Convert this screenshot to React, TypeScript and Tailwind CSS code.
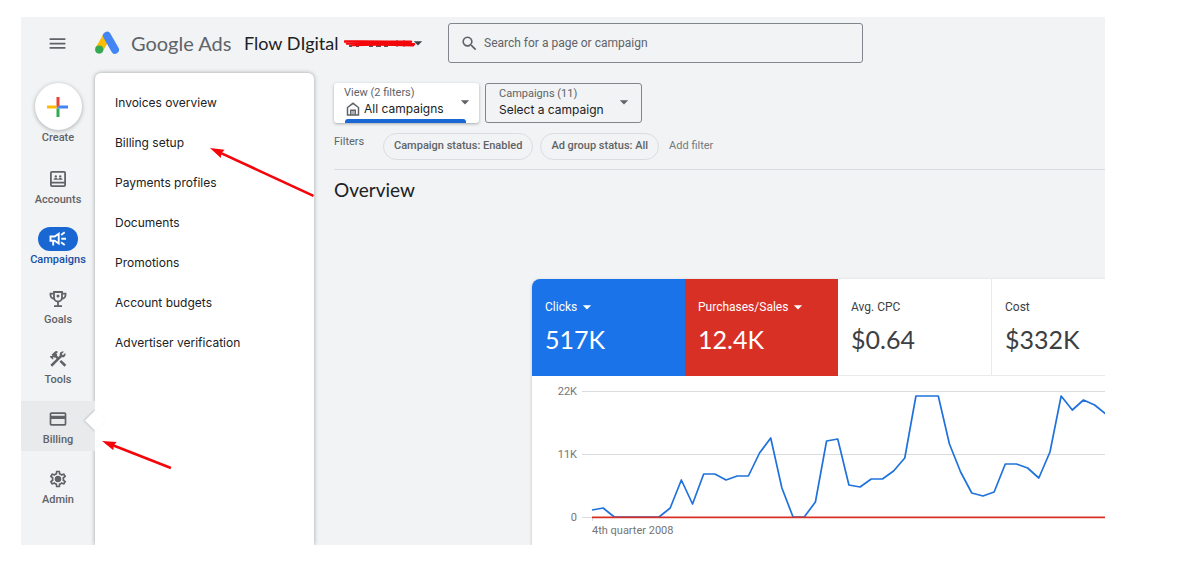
import type { ReactNode } from 'react'
import clsx from 'clsx'
import {
  MdArrowDropDown,
  MdConstruction,
  MdMenu,
  MdOutlineCreditCard,
  MdOutlineSettings,
  MdSearch,
} from 'react-icons/md'

const flyoutLinks = [
  'Invoices overview',
  'Billing setup',
  'Payments profiles',
  'Documents',
  'Promotions',
  'Account budgets',
  'Advertiser verification',
]

const metrics = [
  { label: 'Clicks', value: '517K', tone: 'bg-[#1a73e8] text-white', menu: true },
  { label: 'Purchases/Sales', value: '12.4K', tone: 'bg-[#d93025] text-white', menu: true },
  { label: 'Avg. CPC', value: '$0.64', tone: 'border-b border-[#e8eaed] text-[#3c4043]', menu: false },
  { label: 'Cost', value: '$332K', tone: 'border-b border-l border-[#e8eaed] text-[#3c4043]', menu: false },
]

// distance below the 22K grid line, one entry per period
const clicks = [
  119, 117, 126, 126, 126, 126, 126, 117, 89, 113, 83, 83, 89, 85, 85, 62, 47, 97, 126, 126, 111, 50,
  48, 94, 96, 88, 88, 80, 67, 5, 5, 5, 53, 81, 102, 105, 101, 73, 73, 77, 87, 61, 5, 19, 9, 14, 23,
]

function AdsLogo() {
  return (
    <svg viewBox="0 0 24 24" className="h-6 w-6" strokeWidth="8" fill="none" aria-hidden="true">
      <path d="M12 5 4.2 18.5" stroke="#fbbc04" />
      <path d="M12 4.7 20 18.7" stroke="#4285f4" strokeLinecap="round" />
      <circle cx="4.2" cy="18.6" r="4.1" fill="#34a853" />
    </svg>
  )
}

function CreateIcon() {
  return (
    <svg viewBox="0 0 22 22" className="h-[22px] w-[22px]" aria-hidden="true">
      <path d="M9.5 1h3v8.5l-3 3z" fill="#ea4335" />
      <path d="M9.5 12.5h3V21h-3z" fill="#34a853" />
      <path d="M0 9.5h9.5v3H0z" fill="#fbbc04" />
      <path d="M12.5 9.5H21v3H9.5z" fill="#4285f4" />
    </svg>
  )
}

function AccountsIcon() {
  return (
    <svg viewBox="0 0 18 18" className="h-[18px] w-[18px]" fill="currentColor" aria-hidden="true">
      <path
        fillRule="evenodd"
        d="M3 1h12a2 2 0 0 1 2 2v12a2 2 0 0 1-2 2H3a2 2 0 0 1-2-2V3a2 2 0 0 1 2-2Zm-.2 1.8v9h12.4v-9Zm0 10.6v1.8h12.4v-1.8Z"
      />
      <circle cx="6.8" cy="6.4" r="1.2" />
      <circle cx="11.2" cy="6.4" r="1.2" />
      <path d="M4.500 9.800c0-1.200 1.100-1.700 2.300-1.700s2.200.5 2.200 1.700Zm4.500 0c0-1.200 1-1.700 2.200-1.700s2.300.5 2.300 1.700Z" />
    </svg>
  )
}

function CampaignsIcon() {
  return (
    <svg
      viewBox="0 0 18 16"
      className="h-4 w-[18px]"
      fill="none"
      stroke="currentColor"
      strokeWidth="1.9"
      aria-hidden="true"
    >
      <path d="M1.500 5.500h4.200l4-2.700v9.700l-4-2.700H1.500Z" />
      <path d="M4.200 9.800v4.700" />
      <path d="M12.300 7.700H17M12.100 4l3.600-2.700M12.100 11.300l3.600 2.700" />
    </svg>
  )
}

function GoalsIcon() {
  return (
    <svg
      viewBox="0 0 18 18"
      className="h-[18px] w-[18px]"
      fill="none"
      stroke="currentColor"
      strokeWidth="1.8"
      aria-hidden="true"
    >
      <path d="M5 2h8v5.500a4 4 0 0 1-8 0Z" />
      <path d="M5 3.700H1.500V5A3.700 3.700 0 0 0 5.200 8.700M13 3.700h3.500V5a3.700 3.700 0 0 1-3.700 3.700M9 11.500V16M5 16.200h8" />
      <circle cx="9" cy="6" r="1.500" fill="currentColor" stroke="none" />
    </svg>
  )
}

function HomeIcon() {
  return (
    <svg
      viewBox="0 0 14 14"
      className="h-[14px] w-[14px] shrink-0 text-[#5f6368]"
      fill="none"
      stroke="currentColor"
      strokeWidth="1.5"
      aria-hidden="true"
    >
      <path d="M1.500 5.500 7 1.300l5.500 4.200v7.500h-11Z" />
      <path d="M4.800 13V8.300h4.400V13" />
      <path d="M7 8.300V13" strokeWidth="1" />
    </svg>
  )
}

function AdminIcon() {
  return (
    <span className="grid place-items-center">
      <MdOutlineSettings className="col-start-1 row-start-1 h-5 w-5" />
      <span className="col-start-1 row-start-1 h-[6px] w-[6px] rounded-full bg-current" />
    </span>
  )
}

const railItems: { label: string; icon: ReactNode; state?: 'active' | 'open' }[] = [
  { label: 'Accounts', icon: <AccountsIcon /> },
  { label: 'Campaigns', icon: <CampaignsIcon />, state: 'active' },
  { label: 'Goals', icon: <GoalsIcon /> },
  { label: 'Tools', icon: <MdConstruction className="h-5 w-5" /> },
  { label: 'Billing', icon: <MdOutlineCreditCard className="h-5 w-5" />, state: 'open' },
  { label: 'Admin', icon: <AdminIcon /> },
]

function Header() {
  return (
    <header className="flex h-14 items-center pb-1 pl-[26px]">
      <button type="button" aria-label="Main menu" className="text-[#5f6368]">
        <MdMenu className="h-[21px] w-[21px]" />
      </button>
      <a href="#home" className="ml-[27px] flex items-center gap-3 text-[#5f6368]">
        <AdsLogo />
        <span className="w-[113px] font-[Lato] text-xl leading-6 whitespace-nowrap">Google Ads</span>
      </a>
      <button type="button" aria-label="Switch account" className="flex items-center text-[#202124]">
        <span className="w-[100px] text-left font-[Lato] text-lg leading-6 whitespace-nowrap">
          Flow DIgital
        </span>
        <Redaction />
        <MdArrowDropDown className="-ml-2 h-5 w-5 text-[#3c4043]" />
      </button>
      <label className="ml-5 flex h-10 w-full max-w-[415px] items-center rounded-[3px] border border-[#80868b] pl-[11px]">
        <MdSearch className="h-[19px] w-[19px] shrink-0 text-[#5f6368]" />
        <input
          type="search"
          aria-label="Search"
          placeholder="Search for a page or campaign"
          className="ml-[5px] w-full bg-transparent text-xs outline-none placeholder:text-[#5f6368]"
        />
      </label>
    </header>
  )
}

function Redaction() {
  return (
    <svg viewBox="0 0 72 12" className="h-3 w-[72px]" fill="none" aria-hidden="true">
      <path d="M5 9h3m4 0h3m10 0h4m3 0h5m3 0h4m9-5.500v6m7-6v6" stroke="#3a1a1a" strokeWidth="1.5" />
      <path
        d="M1 4.500c12 0 40 .4 66 .2M3 6.500c20 .4 44 0 67 .7M8 8c18-.8 38-.6 61 .2"
        stroke="#f4050a"
        strokeWidth="2.600"
        strokeLinecap="round"
      />
    </svg>
  )
}

function Rail() {
  return (
    <nav className="flex w-[74px] shrink-0 flex-col pt-[10px] text-[11px] leading-4 font-medium text-[#5f6368]">
      <button type="button" className="flex flex-col items-center">
        <span className="flex h-[47px] w-[47px] items-center justify-center rounded-full bg-white shadow-[0_1px_4px_rgba(60,64,67,0.4)]">
          <CreateIcon />
        </span>
        Create
      </button>
      <div className="mt-[15px] flex flex-col gap-[10px]">
        {railItems.map((item) => (
          <a
            key={item.label}
            href={`#${item.label.toLowerCase()}`}
            className={clsx(
              'relative flex h-[50px] flex-col items-center gap-px pt-[6px]',
              item.state === 'active' && 'text-[#174ea6]',
              item.state === 'open' && 'bg-[#e8eaeb]',
            )}
          >
            <span
              className={clsx(
                'flex h-6 w-10 items-center justify-center rounded-full',
                item.state === 'active' && 'bg-[#1967d2] text-white',
              )}
            >
              {item.icon}
            </span>
            {item.label}
            {item.state === 'open' ? (
              <span className="absolute top-3 -right-2 h-[15px] w-[15px] rotate-45 bg-white shadow-[-1px_1px_2px_rgba(60,64,67,0.2)]" />
            ) : null}
          </a>
        ))}
      </div>
    </nav>
  )
}

function Flyout() {
  return (
    <nav className="w-[219px] shrink-0 rounded-t-md bg-white pt-[10px] shadow-[0_0_4px_rgba(60,64,67,0.45)]">
      {flyoutLinks.map((label) => (
        <a
          key={label}
          href="#billing"
          className="flex h-10 items-center pl-5 font-[Inter] text-xs text-[#202124]"
        >
          {label}
        </a>
      ))}
    </nav>
  )
}

function Scope() {
  return (
    <div className="flex gap-[6px]">
      <label className="relative flex h-10 w-[145px] flex-col rounded-[3px] bg-white pt-[2px] pl-[10px] shadow-[0_1px_3px_rgba(60,64,67,0.4)]">
        <span className="text-[11px] leading-4 text-[#5f6368]">View (2 filters)</span>
        <span className="flex items-center gap-1 pl-[2px]">
          <HomeIcon />
          <select className="w-full appearance-none bg-transparent font-[Inter] text-xs leading-4 text-[#202124]">
            <option>All campaigns</option>
          </select>
        </span>
        <MdArrowDropDown className="pointer-events-none absolute top-[9px] right-1 h-5 w-5 text-[#5f6368]" />
        <span className="absolute bottom-0 left-[11px] h-1 w-[121px] rounded-t-[3px] bg-[#1967d2]" />
      </label>
      <label className="relative flex h-10 w-[157px] flex-col rounded-[3px] border border-[#80868b] pt-[2px] pl-[13px]">
        <span className="text-[11px] leading-4 text-[#5f6368]">Campaigns (11)</span>
        <select className="w-full appearance-none bg-transparent font-[Inter] text-xs leading-4 text-[#202124]">
          <option>Select a campaign</option>
        </select>
        <MdArrowDropDown className="pointer-events-none absolute top-2 right-[7px] h-5 w-5 text-[#5f6368]" />
      </label>
    </div>
  )
}

function Filters() {
  const chip =
    'h-[27px] rounded-full border border-[#dadce0] px-[10px] font-medium whitespace-nowrap text-[#5f6368]'
  return (
    <div className="flex items-center border-b border-[#dadce0] pt-[10px] pb-[9px] text-[11px] text-[#5f6368]">
      <span className="w-[49px] self-start leading-[18px]">Filters</span>
      <button type="button" className={chip}>
        Campaign status: Enabled
      </button>
      <button type="button" className={clsx(chip, 'ml-[7px]')}>
        Ad group status: All
      </button>
      <button type="button" className="ml-[10px] text-[#757a7f]">
        Add filter
      </button>
    </div>
  )
}

function ClicksChart() {
  const points = clicks.map((y, i) => `${10 + i * 11.17},${y + 1}`).join(' ')
  return (
    <div className="flex overflow-hidden pt-[14px] pb-[6px] text-[11px] leading-4 text-[#757575]">
      <div className="-mt-[6px] flex h-[142px] w-[45px] shrink-0 flex-col justify-between text-right">
        <span>22K</span>
        <span>11K</span>
        <span>0</span>
      </div>
      <div className="ml-[5px] shrink-0">
        <svg viewBox="0 0 540 133" className="h-[133px] w-[540px]" fill="none" aria-hidden="true">
          <path d="M0 1.500h540M0 64.500h540M0 127.500h540M10.500 127v4" stroke="#dadce0" />
          <polyline points={points} stroke="#1f72dc" strokeWidth="1.700" strokeLinejoin="round" />
          <path d="M10 127.300h530" stroke="#d93025" strokeWidth="1.800" />
        </svg>
        <p className="pl-[10px]">4th quarter 2008</p>
      </div>
    </div>
  )
}

function Overview() {
  return (
    <section>
      <h1 className="pt-[6px] font-[Lato] text-[19px] leading-7 text-[#202124]">Overview</h1>
      <div className="mt-[75px] ml-[198px] overflow-hidden rounded-tl-lg bg-white shadow-[0_1px_3px_rgba(60,64,67,0.3)]">
        <div className="flex">
          {metrics.map((metric) => (
            <button
              key={metric.label}
              type="button"
              className={clsx(
                'flex h-[97px] w-[153px] shrink-0 flex-col pt-[18px] pl-[13px] text-left',
                metric.tone,
              )}
            >
              <span className="flex items-center text-xs leading-5">
                {metric.label}
                {metric.menu ? <MdArrowDropDown className="h-5 w-5" /> : null}
              </span>
              <span className="pt-[6px] font-[Lato] text-[25px] leading-8">{metric.value}</span>
            </button>
          ))}
        </div>
        <ClicksChart />
      </div>
    </section>
  )
}

function Pointer({ angle, length }: { angle: number; length: number }) {
  return (
    <svg width="120" height="60" viewBox="0 0 120 60" className="overflow-visible" aria-hidden="true">
      <g transform={`rotate(${angle})`} fill="#f4050a">
        <path d="M0 0 14-4.500 12.500 0 14 4.500Z" />
        <path d={`M11-1.300H${length}V1.300H11Z`} />
      </g>
    </svg>
  )
}

export default function App() {
  return (
    <div className="bg-white pt-[17px] pr-[94px] pb-[21px] pl-[21px] font-[Roboto,sans-serif]">
      <div className="relative overflow-hidden bg-[#f1f3f4]">
        <Header />
        <div className="flex">
          <Rail />
          <Flyout />
          <main className="min-w-0 flex-1 pt-[10px] pl-5">
            <Scope />
            <Filters />
            <Overview />
          </main>
        </div>
        <div className="pointer-events-none absolute top-[131px] left-[189px]">
          <Pointer angle={24.8} length={114} />
        </div>
        <div className="pointer-events-none absolute top-[424px] left-[81px]">
          <Pointer angle={21.4} length={74} />
        </div>
      </div>
    </div>
  )
}
